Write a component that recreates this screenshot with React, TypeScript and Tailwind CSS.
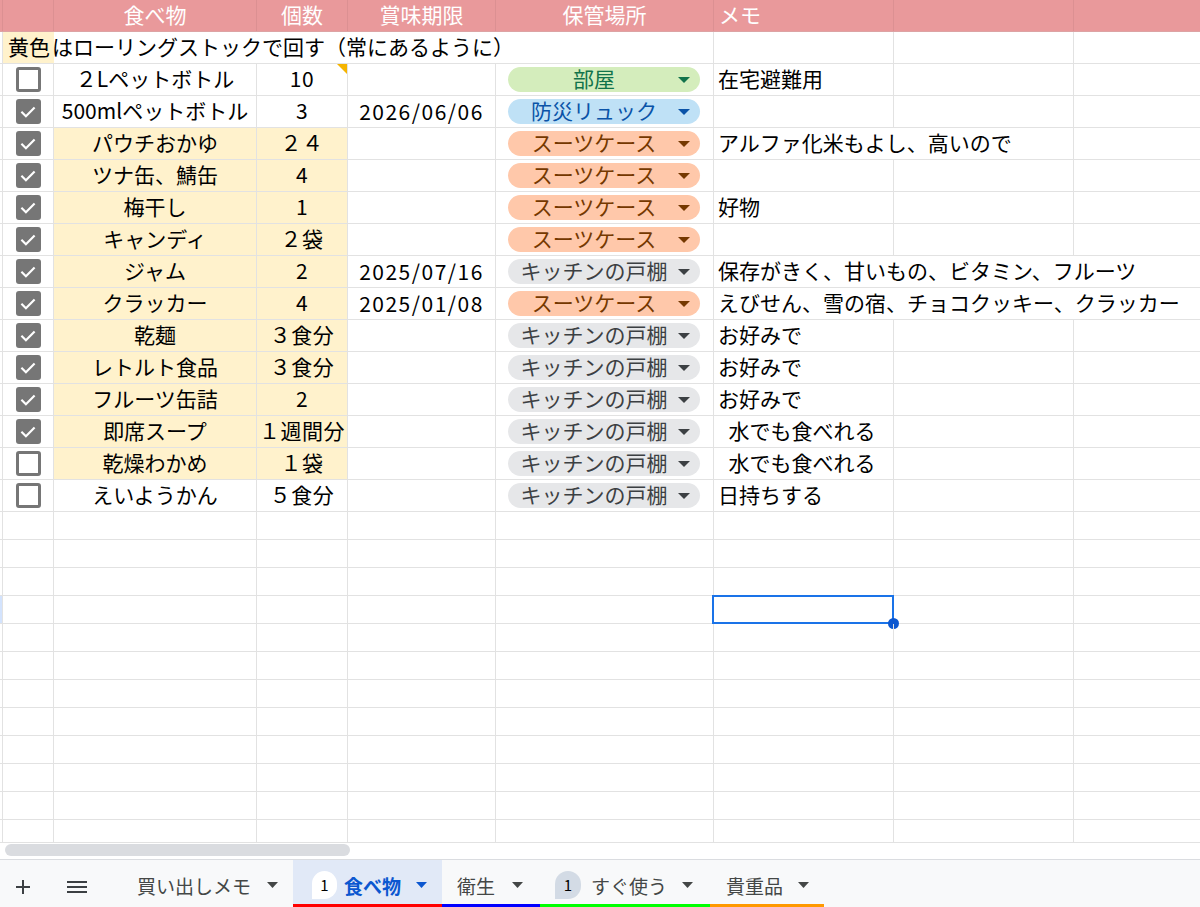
import React from 'react';

type Loc = '部屋' | '防災リュック' | 'スーツケース' | 'キッチンの戸棚';

const chipStyle: Record<Loc, string> = {
  '部屋': 'bg-[#d4edbc] text-[#11734b]',
  '防災リュック': 'bg-[#bfe1f6] text-[#0a53a8]',
  'スーツケース': 'bg-[#ffc8aa] text-[#753800]',
  'キッチンの戸棚': 'bg-[#e6e7e9] text-[#3c4043]',
};

type Row = {
  check: boolean;
  name: string;
  qty: string;
  date?: string;
  loc: Loc;
  memo?: string;
  span?: 1 | 2 | 3;
  yellow: boolean;
  comment?: boolean;
};

const rows: Row[] = [
  { check: false, name: '２Lペットボトル', qty: '10', loc: '部屋', memo: '在宅避難用', yellow: false, comment: true },
  { check: true, name: '500mlペットボトル', qty: '3', date: '2026/06/06', loc: '防災リュック', yellow: false },
  { check: true, name: 'パウチおかゆ', qty: '２４', loc: 'スーツケース', memo: 'アルファ化米もよし、高いので', span: 2, yellow: true },
  { check: true, name: 'ツナ缶、鯖缶', qty: '4', loc: 'スーツケース', yellow: true },
  { check: true, name: '梅干し', qty: '1', loc: 'スーツケース', memo: '好物', yellow: true },
  { check: true, name: 'キャンディ', qty: '２袋', loc: 'スーツケース', yellow: true },
  { check: true, name: 'ジャム', qty: '2', date: '2025/07/16', loc: 'キッチンの戸棚', memo: '保存がきく、甘いもの、ビタミン、フルーツ', span: 3, yellow: true },
  { check: true, name: 'クラッカー', qty: '4', date: '2025/01/08', loc: 'スーツケース', memo: 'えびせん、雪の宿、チョコクッキー、クラッカー', span: 3, yellow: true },
  { check: true, name: '乾麺', qty: '３食分', loc: 'キッチンの戸棚', memo: 'お好みで', yellow: true },
  { check: true, name: 'レトルト食品', qty: '３食分', loc: 'キッチンの戸棚', memo: 'お好みで', yellow: true },
  { check: true, name: 'フルーツ缶詰', qty: '2', loc: 'キッチンの戸棚', memo: 'お好みで', yellow: true },
  { check: true, name: '即席スープ', qty: '１週間分', loc: 'キッチンの戸棚', memo: '\u2002水でも食べれる', yellow: true },
  { check: false, name: '乾燥わかめ', qty: '１袋', loc: 'キッチンの戸棚', memo: '\u2002水でも食べれる', yellow: true },
  { check: false, name: 'えいようかん', qty: '５食分', loc: 'キッチンの戸棚', memo: '日持ちする', yellow: false },
];

function Checkbox({ checked }: { checked: boolean }) {
  if (checked) {
    return (
      <div className="w-[25px] h-[25px] rounded-[3px] bg-[#767676] flex items-center justify-center">
        <svg width="20" height="20" viewBox="0 0 24 24">
          <path d="M5 12.5l4.5 4.5L19 7.5" stroke="white" strokeWidth="2.6" fill="none" strokeLinecap="square" />
        </svg>
      </div>
    );
  }
  return <div className="w-[25px] h-[25px] rounded-[3px] border-[3px] border-[#767676] bg-white" />;
}

function Arrow({ className }: { className?: string }) {
  return (
    <svg width="12" height="6" viewBox="0 0 12 6" className={className}>
      <path d="M0 0H12L6 6Z" fill="currentColor" />
    </svg>
  );
}

function Chip({ loc }: { loc: Loc }) {
  return (
    <div className={`w-full h-[25px] rounded-full flex items-center pl-[8px] pr-[10px] ${chipStyle[loc]}`}>
      <span className="flex-1 text-center leading-none whitespace-nowrap pb-[2px]">{loc}</span>
      <Arrow className="ml-[6px] shrink-0" />
    </div>
  );
}

function TabArrow({ className }: { className?: string }) {
  return (
    <svg width="11" height="6" viewBox="0 0 11 6" className={className}>
      <path d="M0 0H11L5.5 6Z" fill="currentColor" />
    </svg>
  );
}

export default function App() {
  const emptyRows = Array.from({ length: 12 }, (_, i) => i);
  return (
    <div className="w-[1200px] h-[907px] flex flex-col overflow-hidden bg-white text-black font-['Noto_Sans_CJK_JP','Noto_Sans_CJK_SC',sans-serif]">
      <div className="h-[842px] overflow-hidden text-[21px] leading-none">
        {/* header */}
        <div className="flex h-[32px] bg-[#e9999b] text-white border-b border-[#dda3a4]">
          <div className="w-[3px] border-r border-[#dc9092]" />
          <div className="w-[51px] border-r border-[#dc9092]" />
          <div className="w-[203px] border-r border-[#dc9092] flex items-center justify-center pb-[2px]">食べ物</div>
          <div className="w-[91px] border-r border-[#dc9092] flex items-center justify-center pb-[2px]">個数</div>
          <div className="w-[148px] border-r border-[#dc9092] flex items-center justify-center pb-[2px]">賞味期限</div>
          <div className="w-[218px] border-r border-[#dc9092] flex items-center justify-center pb-[2px]">保管場所</div>
          <div className="w-[180px] border-r border-[#dc9092] flex items-center pl-[5px] pb-[2px]">メモ</div>
          <div className="w-[180px] border-r border-[#dc9092]" />
          <div className="flex-1" />
        </div>
        {/* note row */}
        <div className="flex h-[32px] border-b border-[#e2e2e2]">
          <div className="w-[3px] border-r border-[#e2e2e2]" />
          <div className="w-[711px] border-r border-[#e2e2e2] flex items-stretch whitespace-nowrap">
            <span className="w-[51px] bg-[#fff2cc] flex items-center pl-[5px] pb-[2px]">黄色</span>
            <span className="flex items-center -ml-[2px] pb-[2px]">はローリングストックで回す（常にあるように）</span>
          </div>
          <div className="w-[180px] border-r border-[#e2e2e2]" />
          <div className="w-[180px] border-r border-[#e2e2e2]" />
          <div className="flex-1" />
        </div>
        {rows.map((r, i) => (
          <div key={i} className="flex h-[32px] border-b border-[#e2e2e2]">
            <div className="w-[3px] border-r border-[#e2e2e2]" />
            <div className="w-[51px] border-r border-[#e2e2e2] flex items-center justify-center">
              <Checkbox checked={r.check} />
            </div>
            <div className={`w-[203px] border-r border-[#e2e2e2] flex items-center justify-center whitespace-nowrap pb-[2px] ${r.yellow ? 'bg-[#fff2cc]' : ''}`}>
              {r.name}
            </div>
            <div className={`relative w-[91px] border-r border-[#e2e2e2] flex items-center justify-center whitespace-nowrap tracking-[0.5px] pb-[2px] ${r.yellow ? 'bg-[#fff2cc]' : ''}`}>
              {r.qty}
              {r.comment && (
                <div className="absolute top-0 right-0 w-0 h-0 border-l-[10px] border-l-transparent border-t-[10px] border-t-[#f5b400]" />
              )}
            </div>
            <div className="w-[148px] border-r border-[#e2e2e2] flex items-center justify-center whitespace-nowrap tracking-[1.5px] pb-[1px]">
              {r.date ?? ''}
            </div>
            <div className="w-[218px] border-r border-[#e2e2e2] flex items-center pl-[12px] pr-[13px]">
              <Chip loc={r.loc} />
            </div>
            {r.span === 3 ? (
              <div className="flex-1 flex items-center pl-[4px] whitespace-nowrap pb-[2px]">{r.memo}</div>
            ) : r.span === 2 ? (
              <>
                <div className="w-[360px] border-r border-[#e2e2e2] flex items-center pl-[4px] whitespace-nowrap pb-[2px]">{r.memo}</div>
                <div className="flex-1" />
              </>
            ) : (
              <>
                <div className="w-[180px] border-r border-[#e2e2e2] flex items-center pl-[4px] whitespace-pre pb-[2px]">{r.memo ?? ''}</div>
                <div className="w-[180px] border-r border-[#e2e2e2]" />
                <div className="flex-1" />
              </>
            )}
          </div>
        ))}
        {emptyRows.map((k) => (
          <div key={`e${k}`} className="flex h-[28px] border-b border-[#e2e2e2]">
            <div className={`w-[3px] border-r border-[#e2e2e2] ${k === 3 ? 'bg-[#d3e3fd]' : ''}`} />
            <div className="w-[51px] border-r border-[#e2e2e2]" />
            <div className="w-[203px] border-r border-[#e2e2e2]" />
            <div className="w-[91px] border-r border-[#e2e2e2]" />
            <div className="w-[148px] border-r border-[#e2e2e2]" />
            <div className="w-[218px] border-r border-[#e2e2e2]" />
            <div className="relative w-[180px] border-r border-[#e2e2e2]">
              {k === 3 && (
                <>
                  <div className="absolute -top-[1px] -left-[2px] -right-[1px] -bottom-[1px] border-2 border-[#1a73e8]" />
                  <div className="absolute -right-[6px] -bottom-[6px] w-[11px] h-[11px] rounded-full bg-[#0b57d0]" />
                </>
              )}
            </div>
            <div className="w-[180px] border-r border-[#e2e2e2]" />
            <div className="flex-1" />
          </div>
        ))}
      </div>
      {/* horizontal scrollbar */}
      <div className="h-[17px] border-t border-[#e2e2e2] bg-white flex items-start pt-[1px] pl-[5px]">
        <div className="w-[345px] h-[12px] rounded-full bg-[#dadce0]" />
      </div>
      {/* sheet tabs */}
      <div className="h-[48px] border-t border-[#dadce0] bg-[#f8f9fa] flex items-stretch text-[19px] text-[#444746]">
        <div className="w-[46px] flex items-center justify-center pt-[6px]">
          <svg width="16" height="16" viewBox="0 0 16 16">
            <path d="M8 1V15M1 8H15" stroke="#3c4043" strokeWidth="2" />
          </svg>
        </div>
        <div className="w-[62px] flex items-center justify-center pt-[6px]">
          <svg width="20" height="12" viewBox="0 0 20 12">
            <path d="M0 1H20M0 6H20M0 11H20" stroke="#3c4043" strokeWidth="2" />
          </svg>
        </div>
        <div className="w-[185px] flex items-center pl-[29px] pt-[6px] border-b-[3px] border-transparent">
          <span className="whitespace-nowrap leading-none">買い出しメモ</span>
          <TabArrow className="ml-[16px]" />
        </div>
        <div className="w-[149px] flex items-center pl-[19px] pt-[6px] bg-[#e1e9f7] border-b-[3px] border-[#ff0000] text-[#0b57d0]">
          <span className="w-[25px] h-[28px] rounded-[13px] rounded-bl-none bg-white text-black text-[15px] flex items-center justify-center">1</span>
          <span className="ml-[7px] font-bold whitespace-nowrap leading-none">食べ物</span>
          <TabArrow className="ml-[15px]" />
        </div>
        <div className="w-[98px] flex items-center pl-[15px] pt-[6px] border-b-[3px] border-[#0000ff]">
          <span className="whitespace-nowrap leading-none">衛生</span>
          <TabArrow className="ml-[17px]" />
        </div>
        <div className="w-[170px] flex items-center pl-[15px] pt-[6px] border-b-[3px] border-[#00ff00]">
          <span className="w-[26px] h-[28px] rounded-[13px] rounded-bl-none bg-[#d3dbe5] text-black text-[15px] flex items-center justify-center">1</span>
          <span className="ml-[10px] whitespace-nowrap leading-none">すぐ使う</span>
          <TabArrow className="ml-[15px]" />
        </div>
        <div className="w-[114px] flex items-center pl-[16px] pt-[6px] border-b-[3px] border-[#ff9900]">
          <span className="whitespace-nowrap leading-none">貴重品</span>
          <TabArrow className="ml-[15px]" />
        </div>
        <div className="flex-1" />
      </div>
    </div>
  );
}
